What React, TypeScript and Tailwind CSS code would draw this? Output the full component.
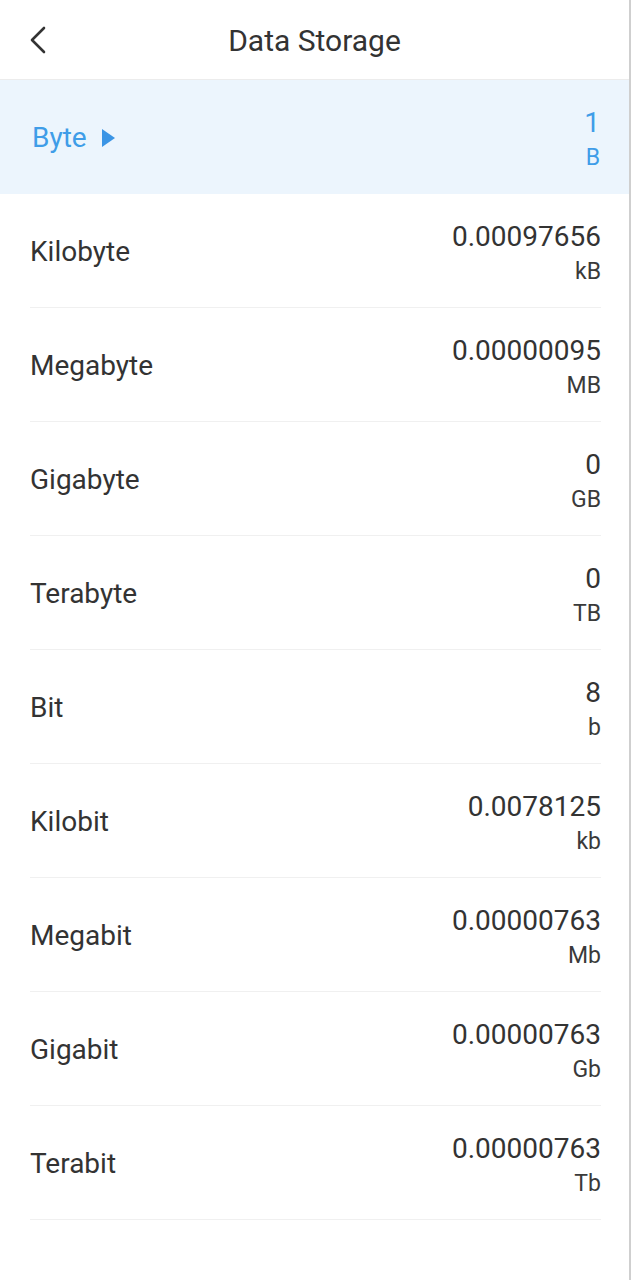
import React from "react";

const rows = [
  { name: "Kilobyte", value: "0.00097656", unit: "kB" },
  { name: "Megabyte", value: "0.00000095", unit: "MB" },
  { name: "Gigabyte", value: "0", unit: "GB" },
  { name: "Terabyte", value: "0", unit: "TB" },
  { name: "Bit", value: "8", unit: "b" },
  { name: "Kilobit", value: "0.0078125", unit: "kb" },
  { name: "Megabit", value: "0.00000763", unit: "Mb" },
  { name: "Gigabit", value: "0.00000763", unit: "Gb" },
  { name: "Terabit", value: "0.00000763", unit: "Tb" },
];

export default function App() {
  return (
    <div
      className="w-[631px] h-[1280px] bg-white border-r-2 border-[#cfcfcf] text-[#333333]"
      style={{ fontFamily: "Roboto, 'Noto Sans', sans-serif" }}
    >
      <div className="relative h-[80px] flex items-center justify-center border-b border-[#ececec]">
        <div className="absolute left-[28px] top-[26px]">
          <svg width="22" height="30" viewBox="0 0 22 30" fill="none">
            <path d="M16 2 L4 14 L16 26" stroke="#333" strokeWidth="2.6" strokeLinecap="round" strokeLinejoin="round" />
          </svg>
        </div>
        <div className="text-[30px] leading-none mt-[3px]">Data Storage</div>
      </div>
      <div className="h-[114px] bg-[#ecf5fd] flex items-center justify-between pl-[32px] pr-[29px] text-[#3f9de8]">
        <div className="flex items-center gap-[15px] mt-[2px]">
          <span className="text-[28px]">Byte</span>
          <svg width="13" height="18" viewBox="0 0 13 18">
            <path d="M0 0 L13 9 L0 18 Z" fill="#3b95e5" />
          </svg>
        </div>
        <div className="text-right mt-[6px]">
          <div className="text-[28px] leading-[35px]">1</div>
          <div className="text-[23px] leading-[35px]">B</div>
        </div>
      </div>
      <div className="pl-[30px] pr-[28px]">
        {rows.map((r) => (
          <div
            key={r.name}
            className="h-[114px] flex items-center justify-between border-b border-[#f0f0f0]"
          >
            <span className="text-[28px] mt-[2px]">{r.name}</span>
            <div className="text-right mt-[6px]">
              <div className="text-[28px] leading-[35px]">{r.value}</div>
              <div className="text-[23px] leading-[35px] text-[#3a3a3a]">{r.unit}</div>
            </div>
          </div>
        ))}
      </div>
    </div>
  );
}
